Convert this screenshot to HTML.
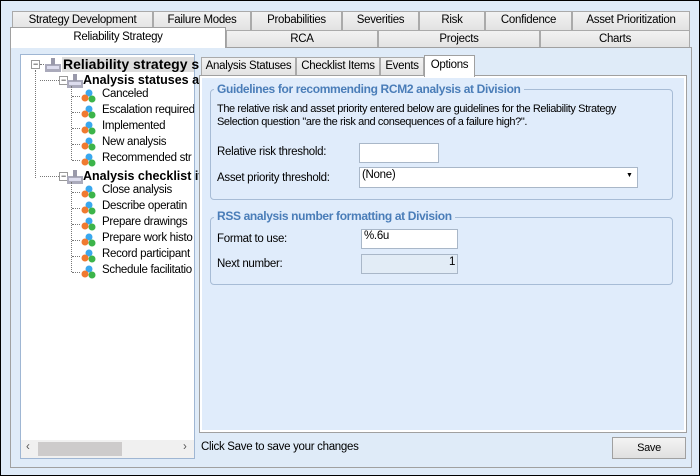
<!DOCTYPE html>
<html><head><style>
*{box-sizing:border-box;margin:0;padding:0}
body{width:700px;height:476px;overflow:hidden;background:#dfebf8;font-family:"Liberation Sans",sans-serif;font-size:11px;letter-spacing:-0.3px;color:#000;position:relative}
.a{position:absolute}
.frame{left:0;top:0;width:700px;height:476px;border:1px solid #000;}
.tab{position:absolute;height:19px;background:linear-gradient(#f2f2f2,#e2e2e2);border:1px solid #aaa;border-bottom:none;text-align:center;line-height:17px;font-size:11.5px;white-space:nowrap;overflow:hidden}
.sel{background:#fff}
.t{position:absolute;white-space:nowrap;font-size:11.5px}
.in{position:absolute;background:#fff;border:1px solid #a9b7c8}
.dot{position:absolute;border-left:1px dotted #777}
.hd{position:absolute;border-top:1px dotted #777}
.gt{position:absolute;white-space:nowrap;background:#e0ecfb;padding:0 3px;color:#4a7db8;font-weight:bold;font-size:12px;letter-spacing:-0.35px}
</style></head><body>
<div class="a frame"></div>
<div class="tab" style="left:12px;top:11px;width:141px">Strategy Development</div>
<div class="tab" style="left:153px;top:11px;width:98px">Failure Modes</div>
<div class="tab" style="left:251px;top:11px;width:91px">Probabilities</div>
<div class="tab" style="left:342px;top:11px;width:77px">Severities</div>
<div class="tab" style="left:419px;top:11px;width:66px">Risk</div>
<div class="tab" style="left:485px;top:11px;width:87px">Confidence</div>
<div class="tab" style="left:572px;top:11px;width:118px">Asset Prioritization</div>
<div class="tab" style="left:226px;top:30px;width:152px;height:18px">RCA</div>
<div class="tab" style="left:378px;top:30px;width:162px;height:18px">Projects</div>
<div class="tab" style="left:540px;top:30px;width:150px;height:18px">Charts</div>
<div class="a" style="left:10px;top:47px;width:682px;height:421px;border:1px solid #a0a0a0;background:#dfebf8"></div>
<div class="tab sel" style="left:10px;top:27px;width:216px;height:21px;border-color:#a0a0a0;line-height:19px">Reliability Strategy</div>
<div class="a" style="left:20px;top:54px;width:175px;height:405px;background:#fff;border:1px solid #9fb6d3"></div>
<div class="a" style="left:31px;top:60px;width:9px;height:9px;border:1px solid #999;background:#fff;font-size:9px;line-height:6px;text-align:center">−</div>
<div class="hd" style="left:40px;top:64px;width:6px"></div>
<svg class="a" style="left:44px;top:57px" width="18" height="16"><rect x="1" y="7" width="16" height="8" fill="#aab"/><rect x="7" y="1" width="4" height="7" fill="#99a"/><rect x="3" y="9" width="12" height="3" fill="#dde"/></svg>
<div class="a" style="left:62px;top:57px;width:132px;height:15px;background:#ddd"></div>
<div class="t" style="left:63px;top:56px;font-size:14px;font-weight:bold;letter-spacing:0">Reliability strategy s</div>
<div class="dot" style="left:35px;top:70px;height:108px"></div>
<div class="a" style="left:59px;top:76px;width:9px;height:9px;border:1px solid #999;background:#fff;font-size:9px;line-height:6px;text-align:center">−</div>
<div class="hd" style="left:40px;top:80px;width:19px"></div>
<svg class="a" style="left:66px;top:73px" width="18" height="16"><rect x="1" y="7" width="16" height="8" fill="#aab"/><rect x="7" y="1" width="4" height="7" fill="#99a"/><rect x="3" y="9" width="12" height="3" fill="#dde"/></svg>
<div class="t" style="left:83px;top:73px;font-weight:bold;font-size:12.5px;letter-spacing:0">Analysis statuses at</div>
<div class="dot" style="left:71px;top:86px;height:74px"></div>
<div class="a" style="left:59px;top:172px;width:9px;height:9px;border:1px solid #999;background:#fff;font-size:9px;line-height:6px;text-align:center">−</div>
<div class="hd" style="left:40px;top:176px;width:19px"></div>
<svg class="a" style="left:66px;top:169px" width="18" height="16"><rect x="1" y="7" width="16" height="8" fill="#aab"/><rect x="7" y="1" width="4" height="7" fill="#99a"/><rect x="3" y="9" width="12" height="3" fill="#dde"/></svg>
<div class="t" style="left:83px;top:169px;font-weight:bold;font-size:12.5px;letter-spacing:0">Analysis checklist it</div>
<div class="dot" style="left:71px;top:182px;height:90px"></div>
<div id="tree"></div>
<div class="a" style="left:21px;top:440px;width:173px;height:18px;background:#f0f0f0"></div>
<div class="a" style="left:38px;top:442px;width:84px;height:14px;background:#cdcbcb"></div>
<div class="t" style="left:26px;top:441px;color:#555">‹</div>
<div class="t" style="left:183px;top:441px;color:#555">›</div>
<div class="tab" style="left:201px;top:57px;width:95px;height:19px">Analysis Statuses</div>
<div class="tab" style="left:296px;top:57px;width:84px;height:19px">Checklist Items</div>
<div class="tab" style="left:380px;top:57px;width:44px;height:19px">Events</div>
<div class="a" style="left:199px;top:75px;width:488px;height:358px;border:1px solid #a0a0a0;background:#fff"></div>
<div class="a" style="left:202px;top:78px;width:482px;height:352px;background:#e0ecfb"></div>
<div class="tab sel" style="left:424px;top:55px;width:51px;height:22px;border-color:#a0a0a0;line-height:19px">Options</div>
<div class="a" style="left:210px;top:89px;width:463px;height:111px;border:1px solid #a7bcd6;border-radius:4px"></div>
<div class="gt" style="left:214px;top:82px">Guidelines for recommending RCM2 analysis at Division</div>
<div class="t" style="left:217px;top:103px;line-height:13px;font-size:11px;letter-spacing:-0.4px">The relative risk and asset priority entered below are guidelines for the Reliability Strategy<br>Selection question "are the risk and consequences of a failure high?".</div>
<div class="t" style="left:217px;top:146px">Relative risk threshold:</div>
<div class="in" style="left:359px;top:143px;width:80px;height:20px"></div>
<div class="t" style="left:217px;top:172px">Asset priority threshold:</div>
<div class="in" style="left:359px;top:167px;width:279px;height:21px"></div>
<div class="t" style="left:362px;top:169px">(None)</div>
<div class="t" style="left:626px;top:172px;font-size:7px">▼</div>
<div class="a" style="left:210px;top:217px;width:463px;height:68px;border:1px solid #a7bcd6;border-radius:4px"></div>
<div class="gt" style="left:214px;top:209px">RSS analysis number formatting at Division</div>
<div class="t" style="left:217px;top:233px">Format to use:</div>
<div class="in" style="left:361px;top:229px;width:97px;height:20px"></div>
<div class="t" style="left:364px;top:230px">%.6u</div>
<div class="t" style="left:217px;top:258px">Next number:</div>
<div class="in" style="left:361px;top:254px;width:97px;height:20px;background:#e2ecf6"></div>
<div class="t" style="left:449px;top:256px">1</div>
<div class="t" style="left:201px;top:441px">Click Save to save your changes</div>
<div class="a" style="left:612px;top:437px;width:74px;height:22px;border:1px solid #a0a0a0;background:linear-gradient(#f4f4f4,#e0e0e0);text-align:center;line-height:20px">Save</div>
<script>
var items=[["Canceled",96],["Escalation required",112],["Implemented",128],["New analysis",144],["Recommended str",160],["Close analysis",192],["Describe operatin",208],["Prepare drawings",224],["Prepare work histo",240],["Record participant",256],["Schedule facilitatio",272]];
var h="";items.forEach(function(i){var y=i[1];
h+='<div class="hd" style="left:72px;top:'+y+'px;width:8px"></div>';
h+='<svg class="a" style="left:80px;top:'+(y-7)+'px" width="17" height="14"><circle cx="9" cy="4" r="3.5" fill="#3aa8ee"/><circle cx="5" cy="9" r="3.5" fill="#f07a30"/><circle cx="12" cy="10" r="3.5" fill="#3cb44a"/></svg>';
h+='<div class="t" style="left:102px;top:'+(y-8)+'px;width:92px;overflow:hidden">'+i[0]+'</div>';});
document.getElementById("tree").innerHTML=h;
</script>
</body></html>
